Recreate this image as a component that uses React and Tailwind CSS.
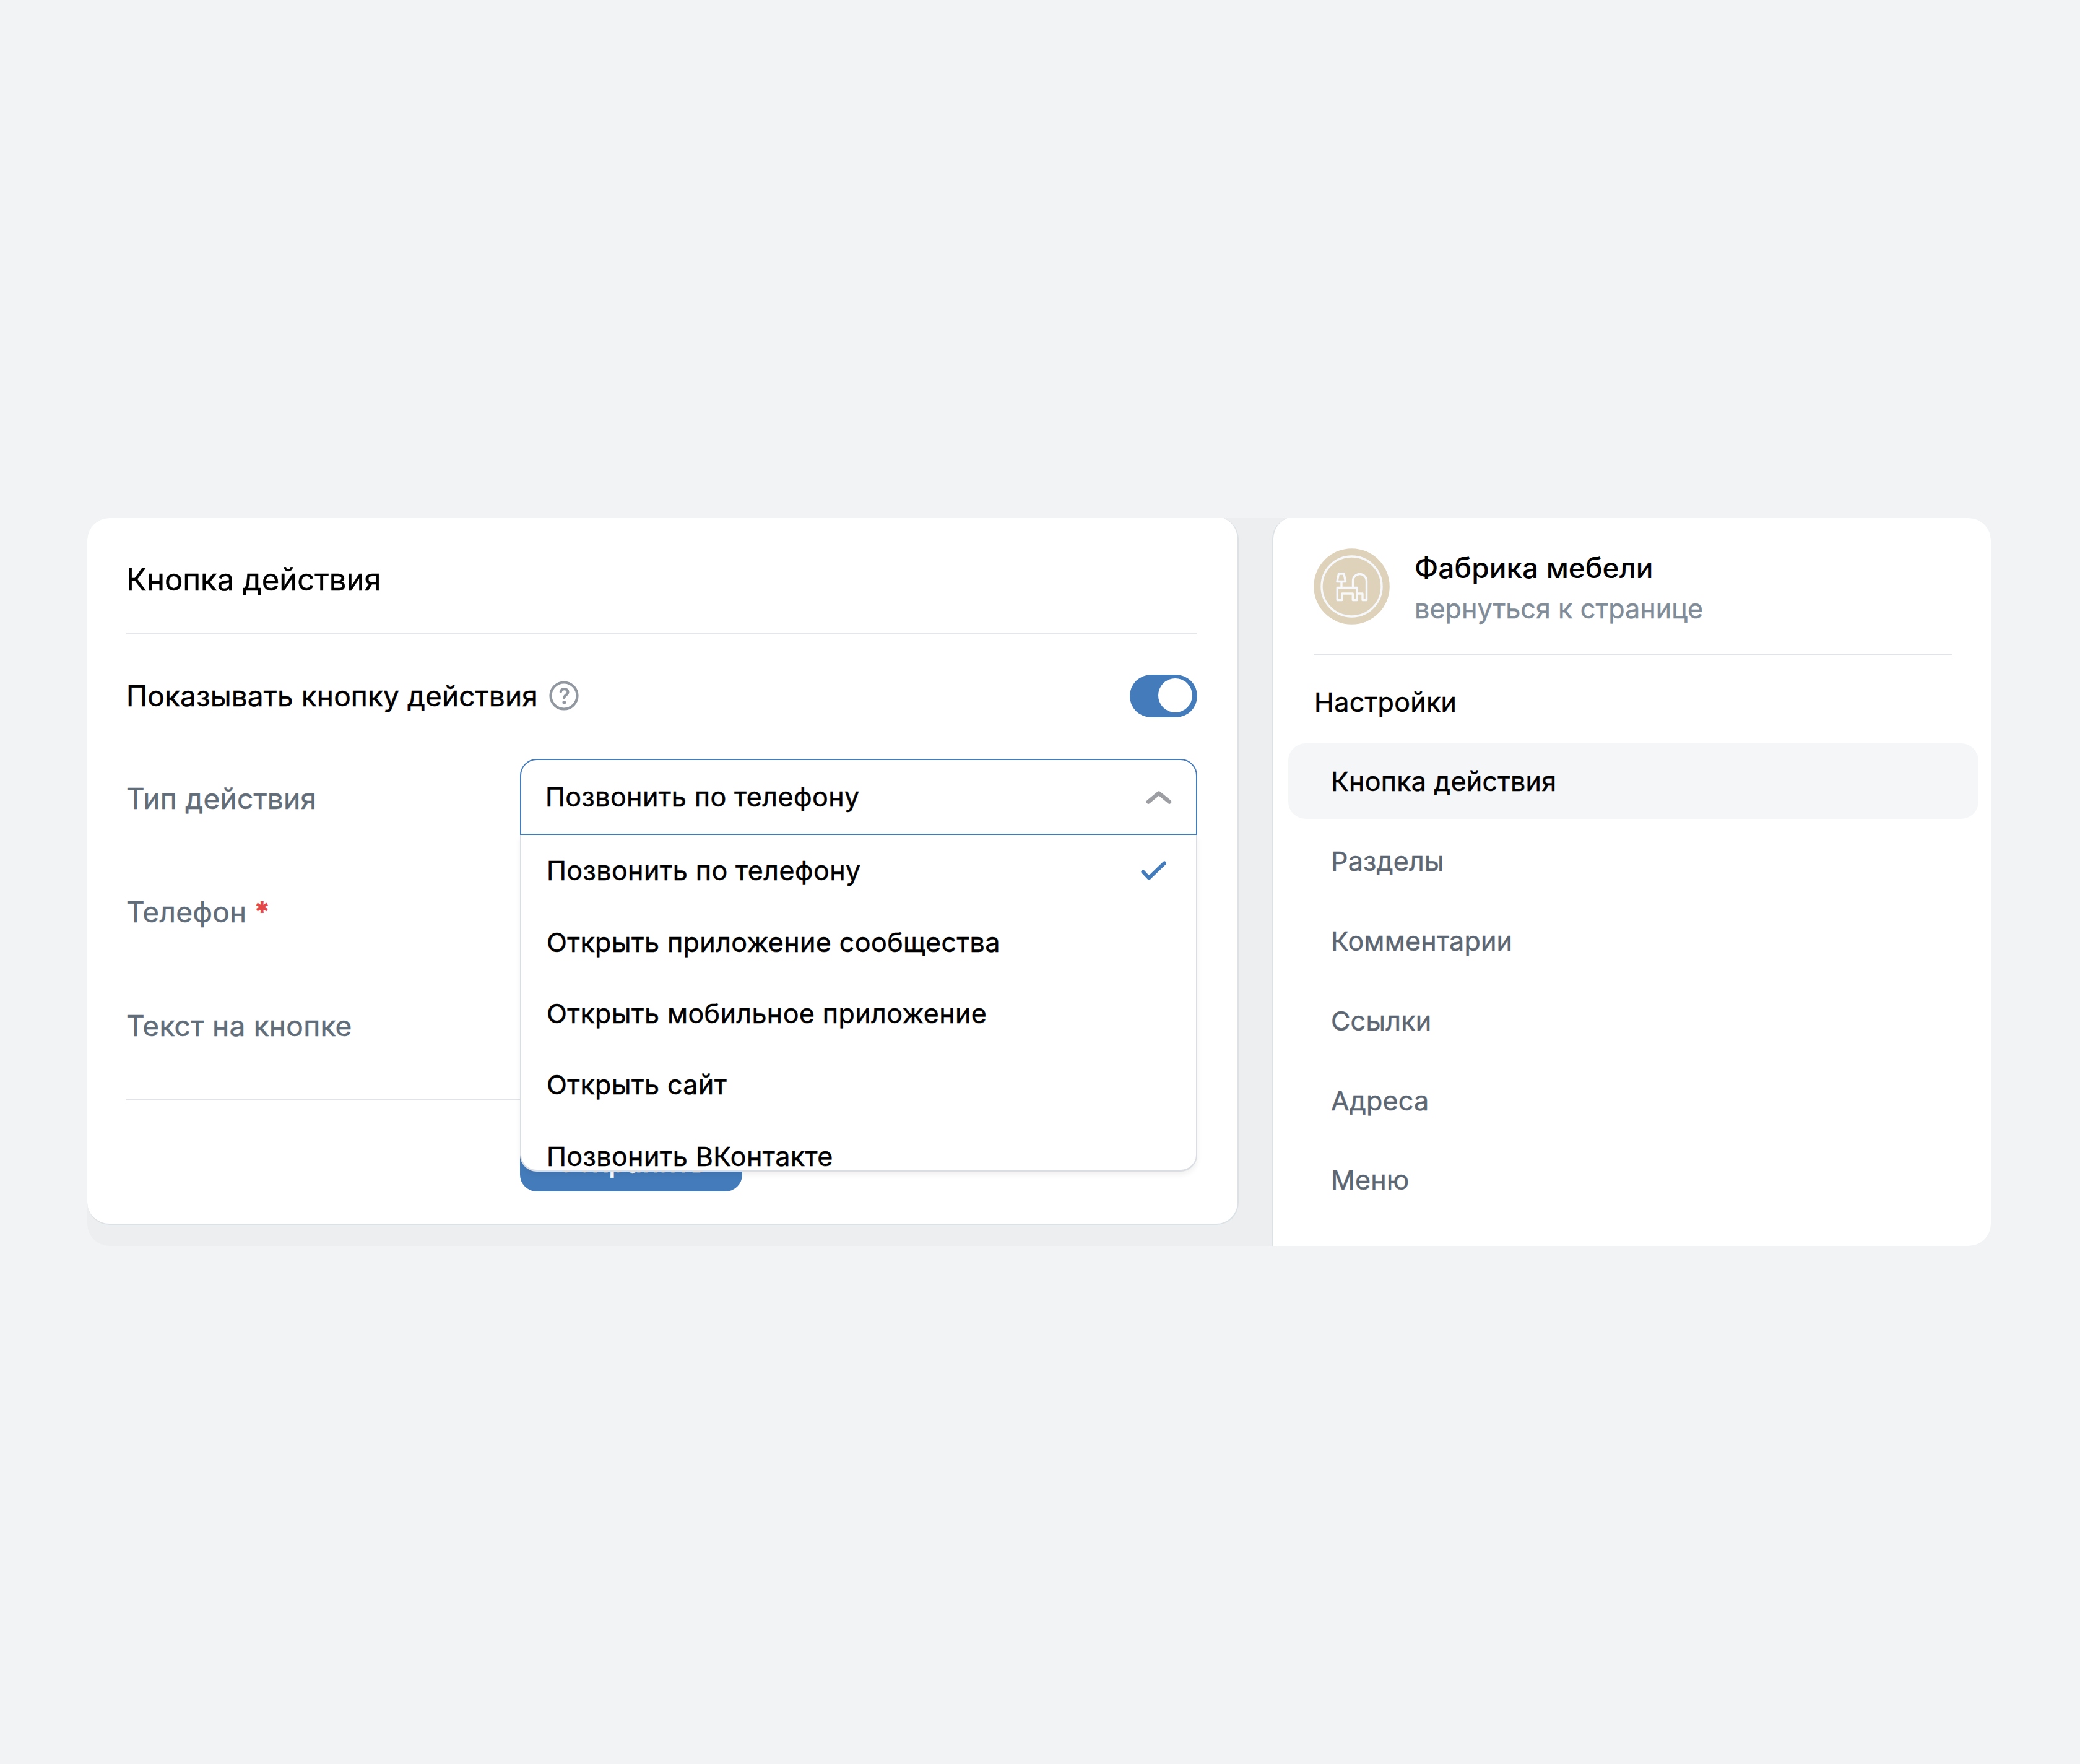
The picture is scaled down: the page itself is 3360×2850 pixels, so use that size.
import { useState } from 'react'

const ACTIONS = [
  'Позвонить по телефону',
  'Открыть приложение сообщества',
  'Открыть мобильное приложение',
  'Открыть сайт',
  'Позвонить ВКонтакте',
]

const MENU = ['Кнопка действия', 'Разделы', 'Комментарии', 'Ссылки', 'Адреса', 'Меню']

function HelpIcon() {
  return (
    <svg width="48" height="48" viewBox="0 0 48 48" fill="none" stroke="#9298a0" strokeWidth="4.2" strokeLinecap="round" strokeLinejoin="round">
      <circle cx="24" cy="24" r="21.5" />
      <path d="M18.800 17.500c.6-2.800 2.700-4.400 5.600-4.400 3.500 0 6 2 6 5 0 4.800-6 4.800-6.100 9.200" />
      <circle cx="24.300" cy="34.800" r="2.900" fill="#9298a0" stroke="none" />
    </svg>
  )
}

function Avatar() {
  return (
    <svg width="123" height="123" viewBox="0 0 123 123" fill="none" stroke="#f6f8fb" strokeWidth="3.4" strokeLinejoin="round">
      <circle cx="61.500" cy="61.500" r="61.300" fill="#ded2ba" stroke="none" />
      <circle cx="61.500" cy="61.500" r="48.500" />
      {/* lamp */}
      <path d="M40.500 41h8.500l2.500 12.500h-13.500z" />
      <path d="M45 54v9.500" />
      {/* table */}
      <path d="M38.300 63.500h32v20h-7v-10.500h-17.500v10.500h-7.500z" />
      {/* chair */}
      <path d="M63.500 63.500v-11a11 11 0 0 1 22 0v31h-6.500v-10.500h-8.500" />
    </svg>
  )
}

function SettingsCard() {
  const [enabled, setEnabled] = useState(true)
  const [selected, setSelected] = useState(ACTIONS[0])

  return (
    <div className="-mt-0.5 h-[1144px] w-[1860px] rounded-[36px] border-r-2 border-b-2 border-[#dce1e6] bg-white pr-[65px] pl-[63px]">
      <div className="flex h-[190px] items-center border-b-[3px] border-[#e4e6e9] pt-[16px]">
        <h1 className="text-[49px] leading-none font-normal text-black">Кнопка действия</h1>
      </div>

      <div className="flex h-[201px] items-center justify-between pb-[2px]">
        <div className="flex items-center gap-[18px] pb-px">
          <span className="text-[46px] leading-none tracking-[0.1px] text-black">Показывать кнопку действия</span>
          <HelpIcon />
        </div>
        <button
          onClick={() => setEnabled(!enabled)}
          className={`flex h-[69px] w-[109px] items-center rounded-full px-[8px] pb-[2px] ${
            enabled ? 'justify-end bg-[#447bba]' : 'justify-start bg-[#99a2ad]'
          }`}
        >
          <span className="size-[55px] rounded-full bg-white" />
        </button>
      </div>

      <div className="grid grid-cols-[636px_1fr] text-[46px] leading-none tracking-[0.25px] text-[#626d7a]">
        <span className="flex h-[123px] items-center pt-[4px]">Тип действия</span>

        <div className="relative">
          <button className="flex h-[123px] w-full items-center justify-between rounded-t-[27px] border-[2.5px] border-[#447bba] bg-white pr-[38px] pl-[39px] text-[43px] tracking-[0.4px] text-black">
            <span>{selected}</span>
            <svg width="44" height="24" viewBox="0 0 44 24" fill="none" stroke="#9c9ea3" strokeWidth="6.5" strokeLinecap="round" strokeLinejoin="round">
              <path d="M5 19.500 22 5.500l17 14" />
            </svg>
          </button>
          {/* open list, the last row is cut by the scroll box */}
          <ul className="absolute inset-x-0 top-[123px] z-10 h-[544px] overflow-hidden rounded-b-[27px] border-x-2 border-b-[3px] border-[#dadee2] bg-white text-[43px] tracking-[0.4px] text-black shadow-[0_5px_10px_rgba(0,0,0,0.06)]">
            {ACTIONS.map((action) => (
              <li
                key={action}
                onClick={() => setSelected(action)}
                className="flex h-[115.4px] items-center justify-between pr-[47px] pl-[41px]"
              >
                <span>{action}</span>
                {action === selected && (
                  <svg width="42" height="32" viewBox="0 0 42 32" fill="none" stroke="#447bba" strokeWidth="6" strokeLinecap="round" strokeLinejoin="round">
                    <path d="M3.500 17.500 13 27.500 38 3.500" />
                  </svg>
                )}
              </li>
            ))}
          </ul>
        </div>

        <span className="mt-[61px] flex h-[123px] items-center pt-[3px]">
          Телефон<span className="ml-[12px] font-bold text-[#e64646]">*</span>
        </span>
        <span />
        <span className="mt-[61px] flex h-[123px] items-center pt-[2px]">Текст на кнопке</span>
        <span />
      </div>

      <div className="mt-[58px] flex h-[150px] items-end border-t-[3px] border-[#e1e3e6] pl-[636px]">
        <button className="flex h-[92px] w-[359px] shrink-0 items-center justify-center rounded-[27px] bg-[#447bba] pb-[4px] text-[45px] leading-none font-medium tracking-[0.5px] text-white">
          Сохранить
        </button>
      </div>
    </div>
  )
}

function Sidebar() {
  const [active, setActive] = useState(MENU[0])

  return (
    <div className="-mt-0.5 h-[1220px] w-[1161px] rounded-t-[36px] border-l-2 border-[#dce1e6] bg-white pr-[20px] pl-[24px]">
      <div className="mr-[42px] ml-[41px] flex h-[224px] items-center gap-[40px] border-b-[3px] border-[#e1e3e6] pt-[3px]">
        <Avatar />
        <div className="flex flex-col gap-[22px] pt-[4px] leading-none">
          <span className="text-[46px] font-medium tracking-[0.1px] text-black [-webkit-text-stroke:0px]">Фабрика мебели</span>
          <span className="text-[43px] tracking-[0.1px] text-[#818c99]">вернуться к странице</span>
        </div>
      </div>

      <h2 className="mt-[52px] ml-[42px] text-[43px] leading-[46px] font-normal tracking-[0.3px] text-black">Настройки</h2>

      <nav className="mt-[44px] flex flex-col gap-[6.9px]">
        {MENU.map((item) => (
          <a
            key={item}
            onClick={() => setActive(item)}
            className={`flex h-[122px] items-center rounded-[28px] pt-px pl-[69px] text-[43px] leading-none tracking-[0.2px] ${
              item === active ? 'bg-[#f4f6f8] text-black' : 'text-[#5d6773]'
            }`}
          >
            {item}
          </a>
        ))}
      </nav>
    </div>
  )
}

function App() {
  return (
    <div className="h-[2850px] w-[3360px] bg-[#f1f3f5] pt-[837px] pl-[141px] font-[Inter,sans-serif] [-webkit-text-stroke:0.5px]">
      <div className="flex h-[1176px] w-[3075px] items-start justify-between overflow-hidden rounded-[36px] bg-[#edeef0]">
        <SettingsCard />
        <Sidebar />
      </div>
    </div>
  )
}

export default App
